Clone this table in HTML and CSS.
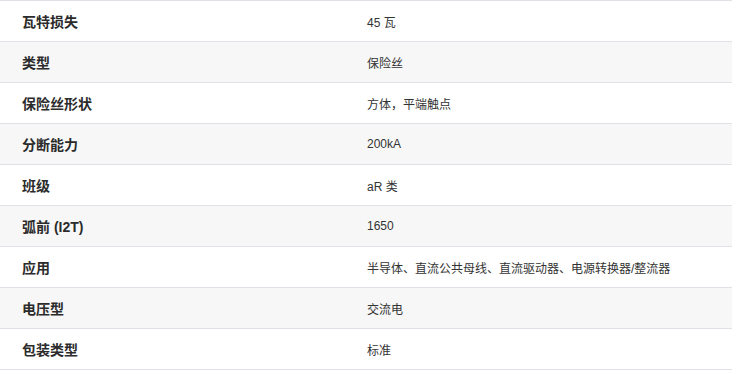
FILE: index.html
```html
<!DOCTYPE html>
<html lang="zh-CN">
<head>
<meta charset="utf-8">
<title>规格</title>
<link rel="stylesheet" href="styles.css">
</head>
<body>
<div class="specs">
  <div class="row"><div class="label">瓦特损失</div><div class="value">45 瓦</div></div>
  <div class="row"><div class="label">类型</div><div class="value">保险丝</div></div>
  <div class="row"><div class="label">保险丝形状</div><div class="value">方体，平端触点</div></div>
  <div class="row"><div class="label">分断能力</div><div class="value">200kA</div></div>
  <div class="row"><div class="label">班级</div><div class="value">aR 类</div></div>
  <div class="row"><div class="label">弧前 (I2T)</div><div class="value">1650</div></div>
  <div class="row"><div class="label">应用</div><div class="value">半导体、直流公共母线、直流驱动器、电源转换器/整流器</div></div>
  <div class="row"><div class="label">电压型</div><div class="value">交流电</div></div>
  <div class="row"><div class="label">包装类型</div><div class="value">标准</div></div>
</div>
</body>
</html>
```
FILE: styles.css
```css
html, body {
  margin: 0;
  padding: 0;
  background: #ffffff;
}
body {
  font-family: "Liberation Sans", Arial, "Noto Sans CJK SC", sans-serif;
  color: #333333;
}
.specs {
  width: 732px;
  border-top: 1px solid #dfe2e7;
}
.row {
  display: grid;
  grid-template-columns: 367px 1fr;
  align-items: center;
  height: 40px;
  border-bottom: 1px solid #dfe2e7;
  background: #ffffff;
}
.row:nth-child(even) {
  background: #f7f7f7;
}
.label {
  padding-left: 22px;
  font-size: 14px;
  font-weight: bold;
  color: #2b2b2b;
}
.value {
  font-size: 12px;
  color: #333333;
}
```
